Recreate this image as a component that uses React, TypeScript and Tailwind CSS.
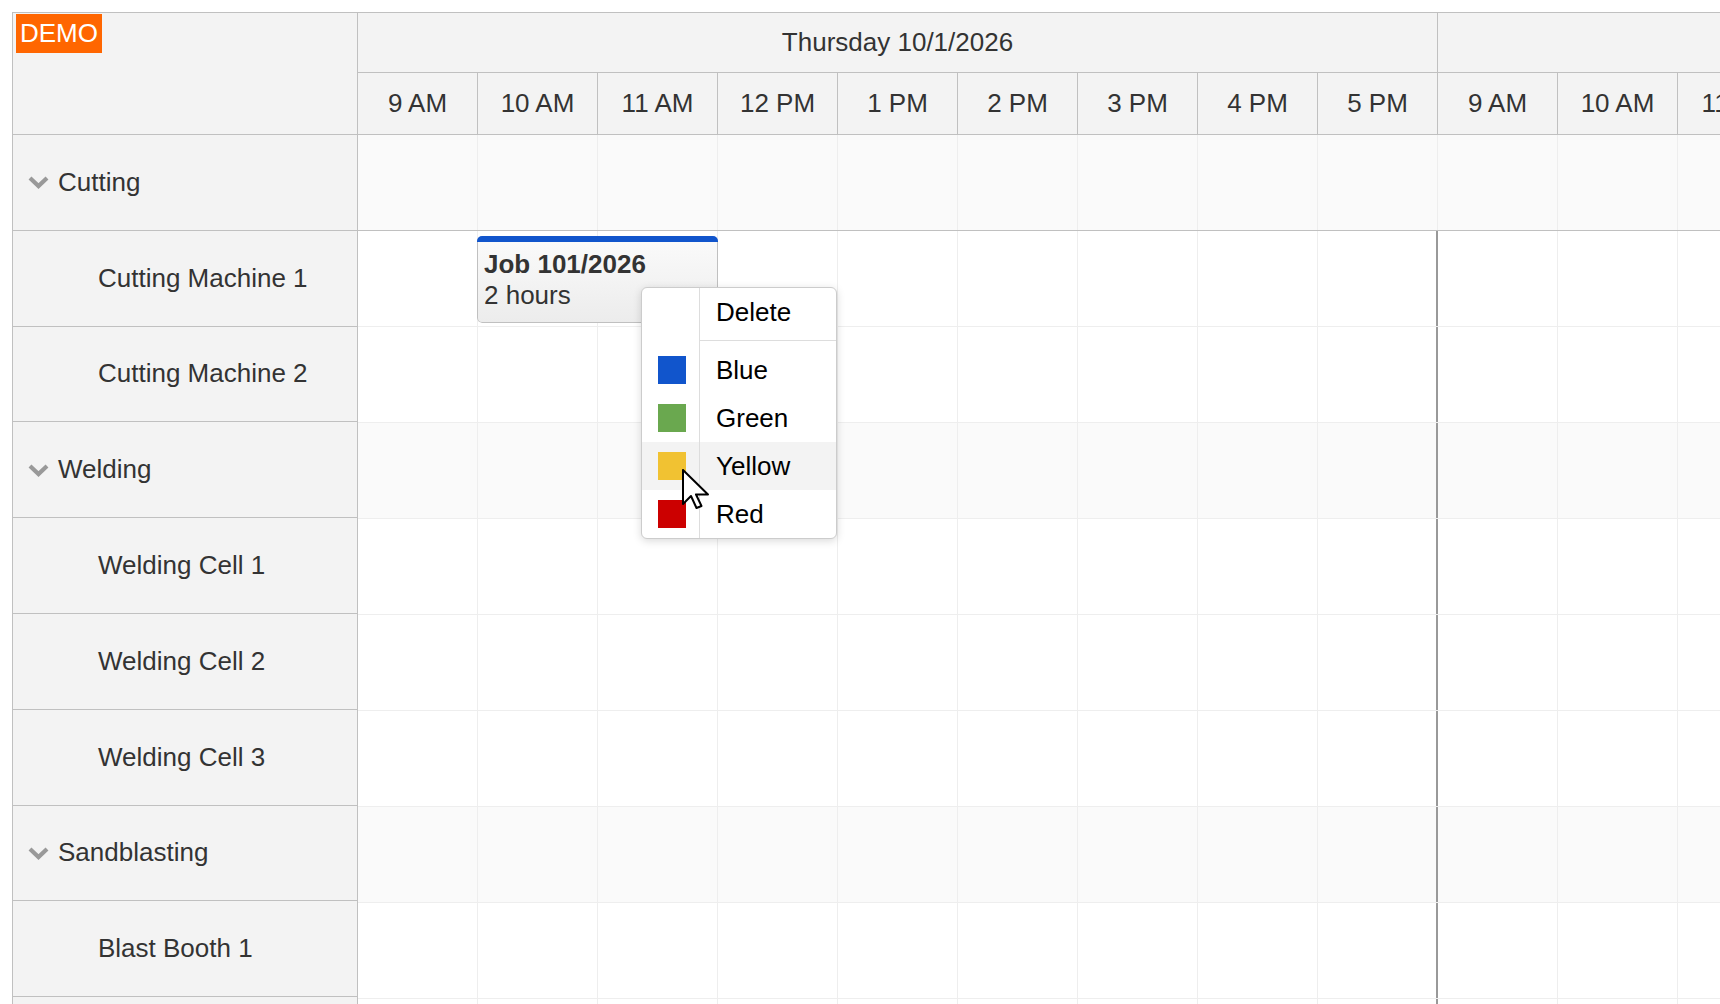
import type { ReactNode } from "react";

const hours = ["9 AM", "10 AM", "11 AM", "12 PM", "1 PM", "2 PM", "3 PM", "4 PM", "5 PM"];
const days = ["Thursday 10/1/2026", "Friday 10/2/2026"];

type Resource = { name: string; group?: boolean };

const resources: Resource[] = [
  { name: "Cutting", group: true },
  { name: "Cutting Machine 1" },
  { name: "Cutting Machine 2" },
  { name: "Welding", group: true },
  { name: "Welding Cell 1" },
  { name: "Welding Cell 2" },
  { name: "Welding Cell 3" },
  { name: "Sandblasting", group: true },
  { name: "Blast Booth 1" },
  { name: "Blast Booth 2" },
];

const colors = [
  { name: "Blue", value: "#1155cc" },
  { name: "Green", value: "#6aa84f" },
  { name: "Yellow", value: "#f1c232" },
  { name: "Red", value: "#cc0000" },
];

function Chevron() {
  return (
    <svg width="21" height="14" viewBox="0 0 21 14" className="shrink-0">
      <path d="M2 3 L10.5 11 L19 3" fill="none" stroke="#999" strokeWidth="4.2" />
    </svg>
  );
}

function ResourceHeader({ res }: { res: Resource }) {
  return (
    <div className="flex h-[95.8px] items-center border-b border-[#c0c0c0]">
      {res.group ? (
        <div className="flex items-center gap-[9px] pl-[15px]">
          <Chevron />
          <span>{res.name}</span>
        </div>
      ) : (
        <span className="pl-[85px]">{res.name}</span>
      )}
    </div>
  );
}

function GridRow({ res, frozen }: { res: Resource; frozen: boolean }) {
  return (
    <div
      className={`flex h-[96px] border-b ${frozen ? "border-[#c0c0c0]" : "border-[#eeeeee]"} ${
        res.group ? "bg-[#fafafa]" : "bg-white"
      }`}
    >
      {days.map((d) =>
        hours.map((h, i) => (
          <div
            key={d + h}
            className={`h-full w-[120px] shrink-0 ${
              i === hours.length - 1 && !frozen
                ? "border-r-2 border-[#999999]"
                : "border-r border-[#eeeeee]"
            }`}
          />
        ))
      )}
    </div>
  );
}

function MenuItem({ icon, children, active }: { icon?: string; children: ReactNode; active?: boolean }) {
  return (
    <div className={`flex h-[48px] items-center ${active ? "bg-[#f3f3f3]" : ""}`}>
      <div className="flex h-full w-[58px] shrink-0 items-center border-r border-[#dddddd] pl-[16px]">
        {icon && <div className="h-[28px] w-[28px]" style={{ backgroundColor: icon }} />}
      </div>
      <span className="pl-[16px] text-black">{children}</span>
    </div>
  );
}

export default function App() {
  return (
    <div className="relative h-[1004px] w-[1720px] overflow-hidden bg-white pl-[12px] pt-[12px] font-['Liberation_Sans',Arial,sans-serif] text-[26px] text-[#333333]">
      <div className="flex w-max border-t border-[#c0c0c0]">
        {/* resource column */}
        <div className="w-[346px] shrink-0 border-x border-[#c0c0c0] bg-[#f3f3f3]">
          <div className="h-[122px] border-b border-[#c0c0c0] pl-[3px] pt-[1px]">
            <div className="inline-block h-[39px] bg-[#ff6600] px-[4px] leading-[39px] text-white">DEMO</div>
          </div>
          {resources.map((r) => (
            <ResourceHeader key={r.name} res={r} />
          ))}
        </div>

        {/* timeline */}
        <div className="relative shrink-0">
          <div className="flex h-[60px] border-b border-[#c0c0c0] bg-[#f3f3f3]">
            {days.map((d) => (
              <div key={d} className="flex w-[1080px] items-center justify-center border-r border-[#c0c0c0]">
                {d}
              </div>
            ))}
          </div>
          <div className="flex h-[62px] border-b border-[#c0c0c0] bg-[#f3f3f3]">
            {days.map((d) =>
              hours.map((h) => (
                <div
                  key={d + h}
                  className="flex w-[120px] shrink-0 items-center justify-center border-r border-[#c0c0c0]"
                >
                  {h}
                </div>
              ))
            )}
          </div>
          {resources.map((r, i) => (
            <GridRow key={r.name} res={r} frozen={i === 0} />
          ))}

          {/* event */}
          <div className="absolute left-[119px] top-[223px] flex h-[87px] w-[241px] flex-col overflow-hidden rounded-[5px]">
            <div className="h-[6px] bg-[#1155cc]" />
            <div className="flex-1 rounded-b-[5px] border-x border-b border-[#c0c0c0] bg-linear-to-b from-[#fafafa] to-[#ececec] pl-[6px] pt-[7px] leading-[31px]">
              <div className="font-bold">Job 101/2026</div>
              <div>2 hours</div>
            </div>
          </div>
        </div>
      </div>

      {/* context menu */}
      <div className="absolute left-[641px] top-[287px] w-[196px] rounded-[6px] border border-[#cccccc] bg-white shadow-[0_2px_8px_rgba(0,0,0,0.15)]">
        <MenuItem>Delete</MenuItem>
        <div className="flex h-[10px]">
          <div className="w-[58px] shrink-0 border-r border-[#dddddd]" />
          <div className="mt-[4px] h-px flex-1 bg-[#dddddd]" />
        </div>
        {colors.map((c) => (
          <MenuItem key={c.name} icon={c.value} active={c.name === "Yellow"}>
            {c.name}
          </MenuItem>
        ))}
      </div>

      {/* mouse pointer */}
      <svg className="absolute left-[682px] top-[469px]" width="30" height="42" viewBox="0 0 30 42">
        <path
          d="M1 1 L1 35 L9 27 L14.5 39 L19.5 37 L14 25.5 L26 25.5 Z"
          fill="white"
          stroke="black"
          strokeWidth="2"
          strokeLinejoin="round"
        />
      </svg>
    </div>
  );
}
